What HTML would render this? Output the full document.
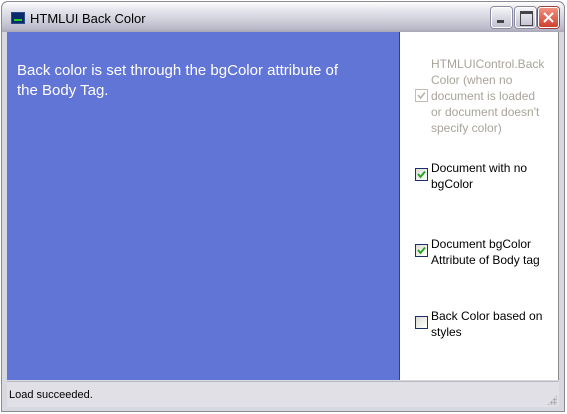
<!DOCTYPE html>
<html><head><meta charset="utf-8"><style>
*{margin:0;padding:0;box-sizing:border-box}
body{width:567px;height:414px;background:#fff;position:relative;overflow:hidden;font-family:"Liberation Sans",Arial,sans-serif}
.frame{position:absolute;left:1px;top:1px;width:564px;height:411px;background:#d8d8e0;border:1px solid #8a8a98;border-radius:7px 7px 0 0}
.title{position:absolute;left:1px;top:1px;width:564px;height:31px;border-radius:7px 7px 0 0;background:linear-gradient(#fefefe 0%,#e6e6ee 25%,#d0d0dc 60%,#b8b8c8 90%,#a8a8b8 100%);border:1px solid #8a8a98;border-bottom:none}
.title span{position:absolute;left:28px;top:9px;font-size:13px;color:#000}
.icon{position:absolute;left:9px;top:10px;width:14px;height:12px;background:#0a2a6a;border:1px solid #2a4a8a}
.icon:after{content:"";position:absolute;left:2px;top:3px;width:8px;height:3px;border-bottom:2px solid #2c2;}
.btn{position:absolute;top:7px;width:21px;height:21px;border:1px solid #fff;border-radius:3px;background:linear-gradient(#f4f4f8,#c0c0d0);box-shadow:0 0 0 1px #8a8aa0}
.b1{left:491px}.b2{left:515px}.b3{left:538px;background:linear-gradient(#f09080,#d04030);box-shadow:0 0 0 1px #a04040}
.b1:after{content:"";position:absolute;left:5px;top:12px;width:7px;height:3px;background:#444}
.b2:after{content:"";position:absolute;left:4px;top:3px;width:11px;height:11px;border:1px solid #444;border-top-width:3px}
.b3 svg{position:absolute;left:3px;top:3px}
.blue{position:absolute;left:7px;top:32px;width:392px;height:348px;background:#6175d7}
.blue p{position:absolute;left:10px;top:29px;width:345px;color:#fff;font-size:15px;line-height:20px}
.side{position:absolute;left:399px;top:32px;width:160px;height:348px;background:#fff;border-left:1px solid #444;border-right:1px solid #888}
.item{position:absolute;left:31px;font-size:12px;line-height:16px;color:#000;width:126px}
.gray{color:#a8a49a;width:118px}
.cb{position:absolute;left:15px;width:13px;height:13px;border:1px solid #1c2e6c;background:linear-gradient(135deg,#dcdcd4,#fff)}
.cb.dis{border-color:#c0bcb0;background:#fff}
.cb svg{position:absolute;left:1px;top:1px}
.status{position:absolute;left:7px;top:381px;width:552px;height:26px;background:#e0e0e6;border-top:1px solid #b8b8c0}
.status span{position:absolute;left:2px;top:7px;font-size:11px;color:#000}
.grip{position:absolute;right:2px;bottom:2px;width:10px;height:10px;background:radial-gradient(circle,#999 1px,transparent 1.2px) 0 0/3px 3px;clip-path:polygon(100% 0,100% 100%,0 100%)}
</style></head><body>
<div class="frame"></div>
<div class="title"><div class="icon"></div><span>HTMLUI Back Color</span></div>
<div class="btn b1"></div><div class="btn b2"></div>
<div class="btn b3"><svg width="13" height="13"><path d="M2 2L11 11M11 2L2 11" stroke="#fff" stroke-width="2"/></svg></div>
<div class="blue"><p>Back color is set through the bgColor attribute of the Body Tag.</p></div>
<div class="side">
<div class="item gray" style="top:24px">HTMLUIControl.Back Color (when no document is loaded or document doesn't specify color)</div>
<div class="cb dis" style="top:57px"><svg width="9" height="9"><path d="M1 4L3.5 7L8 1.5" stroke="#b8b4a8" stroke-width="1.6" fill="none"/></svg></div>
<div class="item" style="top:128px">Document with no bgColor</div>
<div class="cb" style="top:136px"><svg width="9" height="9"><path d="M1 4L3.5 7L8 1.5" stroke="#21a121" stroke-width="1.8" fill="none"/></svg></div>
<div class="item" style="top:204px">Document bgColor Attribute of Body tag</div>
<div class="cb" style="top:212px"><svg width="9" height="9"><path d="M1 4L3.5 7L8 1.5" stroke="#21a121" stroke-width="1.8" fill="none"/></svg></div>
<div class="item" style="top:276px">Back Color based on styles</div>
<div class="cb" style="top:284px"></div>
</div>
<div class="status"><span>Load succeeded.</span><div class="grip"></div></div>
</body></html>
